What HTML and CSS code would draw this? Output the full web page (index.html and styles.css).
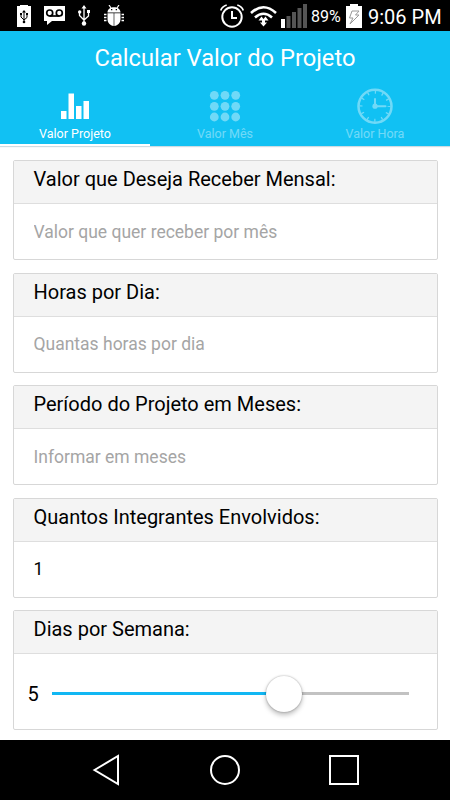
FILE: index.html
```html
<!DOCTYPE html>
<html lang="pt-BR">
<head>
    <meta charset="UTF-8">
    <meta name="viewport" content="width=device-width, initial-scale=1.0">
    <title>Calcular Valor do Projeto</title>
    <link rel="stylesheet" href="styles.css">
</head>
<body>
    <div class="status-bar">
        <div class="status-left">
            <svg width="14" height="22" viewBox="0 0 14 22">
                <path fill="#fff" d="M3 0h8v1h3v21H0V1h3z"/>
                <path fill="none" stroke="#000" d="M7 6v12M4 9v3l3 3 3-2.500V9"/>
                <path d="M5 7.500 7 5l2 2.500zM3 8h2v2H3zM9 8h2v2H9z"/>
                <circle cx="7" cy="17" r="1.300"/>
            </svg>
            <svg width="21" height="19" viewBox="0 0 21 19">
                <path fill="#fff" d="M0 0h21v15H8l-5 4v-4H0z"/>
                <path fill="none" stroke="#000" stroke-width="1.700" d="M5.500 10h10"/>
                <circle cx="5.700" cy="7" r="3" fill="none" stroke="#000" stroke-width="1.700"/>
                <circle cx="15.300" cy="7" r="3" fill="none" stroke="#000" stroke-width="1.700"/>
            </svg>
            <svg width="12" height="21" viewBox="0 0 12 21">
                <path fill="none" stroke="#fff" stroke-width="1.300" d="M6 3v16M1.500 6v4.500L6 15l4.500-4V6"/>
                <path fill="#fff" d="M3.500 3.500 6 0l2.500 3.500zM9 5h3v3H9z"/>
                <circle cx="1.700" cy="7" r="1.700" fill="#fff"/>
                <circle cx="6" cy="18.500" r="2.200" fill="#fff"/>
            </svg>
            <svg width="20" height="21" viewBox="0 0 20 21">
                <path fill="none" stroke="#fff" stroke-width="1.200" d="m5 0 2 3M15 0l-2 3"/>
                <path fill="#fff" d="M3.500 7.500c0-7 13-7 13 0zM3.500 8.300h6.200V21C6 20.500 3.500 18 3.500 14zM10.300 8.300h6.200V14c0 4-2.500 6.500-6.200 7z"/>
                <path stroke="#fff" stroke-width="1.500" d="M0 9.500h2.500M0 12.500h2.500M0 15.500h2.500M17.500 9.500H20M17.500 12.500H20M17.500 15.500H20"/>
                <path d="M7 4h1.300v1.300H7zM11.700 4H13v1.300h-1.300z"/>
            </svg>
        </div>
        <div class="status-right">
            <svg class="alarm" width="24" height="24" viewBox="0 0 24 24" fill="none" stroke="#fff">
                <circle cx="12" cy="13" r="9.700" stroke-width="2"/>
                <path stroke-width="2" d="M12 7v7h5"/>
                <path stroke-width="1.700" d="M.7 6.500Q2 2.500 6.700 1M23.300 6.500Q22 2.500 17.300 1"/>
            </svg>
            <svg class="wifi" width="27" height="22" viewBox="0 0 27 22" fill="none" stroke="#fff" stroke-width="2.600">
                <path d="M1 8Q13.500-3.500 26 8M5 12.500q8.500-7.500 17 0"/>
                <path fill="#fff" stroke="none" d="m8.500 15.500 3-4 2 2.500 2-2.500 3 4h-3.500v2h2l-3.500 4-3.500-4h2v-2z"/>
            </svg>
            <svg class="signal" width="26" height="24" viewBox="0 0 26 24">
                <path fill="#fff" d="M0 15h4v9H0z"/>
                <path fill="#555" d="M5.500 12h4v12h-4zM11 8h4v16h-4zM16.500 4h4v20h-4zM22 0h4v24h-4z"/>
            </svg>
            <span class="percent">89%</span>
            <svg class="battery" width="16" height="24" viewBox="0 0 16 24">
                <path fill="#fff" d="M4 0h8v2h4v22H0V2h4z"/>
                <path fill="#fff" stroke="#999" d="M6 7h7l-3.500 4H13l-9 9 3-6H3.500z"/>
            </svg>
            <span class="clock">9:06 PM</span>
        </div>
    </div>

    <header class="header">
        <h1>Calcular Valor do Projeto</h1>
        <nav class="tabs">
            <a class="tab active">
                <svg width="36" height="36" viewBox="0 0 36 36" fill="#fff">
                    <path d="M4 23h5.500v8H4zM11.500 5.500H17V31h-5.500zM19 18h5.500v13H19zM26.500 13H32v18h-5.500z"/>
                </svg>
                <span>Valor Projeto</span>
            </a>
            <a class="tab">
                <svg width="36" height="36" viewBox="0 0 36 36" fill="#fff">
                    <circle cx="7.300" cy="7.300" r="4.400"/><circle cx="18" cy="7.300" r="4.400"/><circle cx="28.700" cy="7.300" r="4.400"/>
                    <circle cx="7.300" cy="18.300" r="4.400"/><circle cx="18" cy="18.300" r="4.400"/><circle cx="28.700" cy="18.300" r="4.400"/>
                    <circle cx="7.300" cy="29" r="4.400"/><circle cx="18" cy="29" r="4.400"/><circle cx="28.700" cy="29" r="4.400"/>
                </svg>
                <span>Valor Mês</span>
            </a>
            <a class="tab">
                <svg width="36" height="36" viewBox="0 0 36 36" fill="none" stroke="#fff">
                    <circle cx="18" cy="18.200" r="16.500" stroke-width="2.500"/>
                    <circle cx="18" cy="18.200" r="14" stroke-width="3" stroke-dasharray="1.300 6.030" stroke-dashoffset=".65"/>
                    <path stroke-width="2" stroke-linecap="round" d="M18 11v7.200h10.500"/>
                    <circle cx="18" cy="18.200" r="2.600" fill="#fff" stroke="none"/>
                </svg>
                <span>Valor Hora</span>
            </a>
        </nav>
    </header>

    <main class="content">
        <div class="card">
            <label class="card-title" for="valor">Valor que Deseja Receber Mensal:</label>
            <input class="field" type="text" id="valor" placeholder="Valor que quer receber por mês">
        </div>
        <div class="card">
            <label class="card-title" for="horas">Horas por Dia:</label>
            <input class="field" type="text" id="horas" placeholder="Quantas horas por dia">
        </div>
        <div class="card">
            <label class="card-title" for="periodo">Período do Projeto em Meses:</label>
            <input class="field" type="text" id="periodo" placeholder="Informar em meses">
        </div>
        <div class="card">
            <label class="card-title" for="integrantes">Quantos Integrantes Envolvidos:</label>
            <input class="field" type="text" id="integrantes" value="1">
        </div>
        <div class="card">
            <div class="card-title">Dias por Semana:</div>
            <div class="range">
                <span class="range-value">5</span>
                <div class="track">
                    <div class="track-fill" style="width: 65%"></div>
                    <div class="thumb" style="left: 65%"></div>
                </div>
            </div>
        </div>
    </main>

    <div class="nav-bar">
        <svg width="30" height="32" viewBox="0 0 30 32"><path d="M2.500 16 26 2v28z"/></svg>
        <svg width="32" height="32" viewBox="0 0 32 32"><circle cx="16" cy="16" r="14"/></svg>
        <svg width="32" height="32" viewBox="0 0 32 32"><path d="M2 2h28v28H2z"/></svg>
    </div>
</body>
</html>
```
FILE: styles.css
```css
* {
    box-sizing: border-box;
}

body {
    display: flex;
    flex-direction: column;
    height: 800px;
    margin: 0;
    overflow: hidden;
    font-family: Roboto, sans-serif;
    color: #000;
    background-color: #fff;
}

svg {
    display: block;
    flex: none;
}

.status-bar {
    display: flex;
    justify-content: space-between;
    height: 31px;
    padding: 0 9px 0 17px;
    color: #fff;
    background-color: #000;
}

.status-left {
    display: flex;
    align-items: center;
    gap: 13px;
}

.status-left svg:last-child {
    margin-left: 1px;
}

.status-right {
    display: flex;
    align-items: center;
}

.wifi {
    margin-left: 6px;
}

.signal {
    margin-left: 4px;
}

.percent {
    width: 31px;
    margin: 2px 4px 0;
    font-size: 16px;
    white-space: nowrap;
}

.clock {
    width: 73px;
    margin: 2px 0 0 6px;
    font-size: 20px;
    white-space: nowrap;
}

.header {
    display: flex;
    flex-direction: column;
    height: 115px;
    color: #fff;
    background-color: #11c1f3;
    box-shadow: 0 1px 1px #ccdce3;
}

h1 {
    height: 55px;
    margin: 0;
    font-size: 23.7px;
    font-weight: 400;
    line-height: 54px;
    text-align: center;
}

.tabs {
    display: flex;
    flex: 1;
}

.tab {
    display: flex;
    flex: 1;
    flex-direction: column;
    align-items: center;
    padding-top: 2px;
    font-size: 12.5px;
    line-height: 19px;
}

.tab svg,
.tab span {
    opacity: 0.4;
}

.tab.active {
    border-bottom: 2px solid #fff;
}

.tab.active svg,
.tab.active span {
    opacity: 1;
}

.content {
    display: flex;
    flex: 1;
    flex-direction: column;
    gap: 12.5px;
    padding: 14px 12.5px 0;
}

.card {
    display: flex;
    flex-direction: column;
    height: 100px;
    border: 1px solid #d7d7d7;
    border-radius: 2px;
}

.card:last-child {
    height: 120px;
}

.card-title {
    height: 43px;
    padding-left: 20px;
    font-size: 20px;
    line-height: 37px;
    background-color: #f4f4f4;
    border-bottom: 1px solid #dedede;
}

.field {
    height: 55px;
    padding: 0 20px;
    font-family: inherit;
    font-size: 17.5px;
    color: #000;
    background: none;
    border: none;
    outline: none;
}

.field::placeholder {
    color: #a5a5a5;
}

.range {
    display: flex;
    flex: 1;
    align-items: center;
    padding: 4px 28px 0 14px;
}

.range-value {
    width: 24px;
    font-size: 20px;
}

.track {
    position: relative;
    flex: 1;
    height: 3px;
    background-color: #c2c2c2;
}

.track-fill {
    height: 3px;
    background-color: #11b7f3;
}

/* round handle sits over the track */
.thumb {
    position: absolute;
    top: 50%;
    width: 36px;
    height: 36px;
    background-color: #fff;
    border-radius: 50%;
    box-shadow: 0 0 2px rgba(0, 0, 0, 0.35), 0 3px 5px rgba(0, 0, 0, 0.25);
    transform: translate(-50%, -50%);
}

.nav-bar {
    display: flex;
    justify-content: space-between;
    align-items: center;
    height: 60px;
    padding: 0 90px 0 92px;
    background-color: #000;
}

.nav-bar svg {
    fill: none;
    stroke: #fff;
    stroke-width: 2;
}
```
